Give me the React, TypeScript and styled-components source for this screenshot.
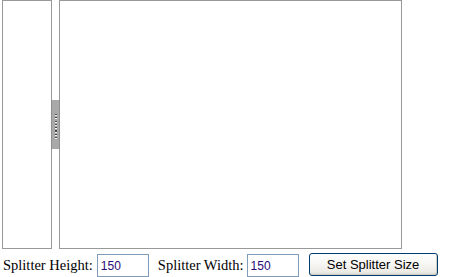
import React from "react";
import styled, { createGlobalStyle } from "styled-components";

const Global = createGlobalStyle`
  html, body { margin: 0; padding: 0; background: #fff; }
  body { font-family: "Liberation Serif", "Times New Roman", serif; }
`;

const Page = styled.div`
  padding-left: 2px;
  width: 451px;
`;

const Splitter = styled.div`
  display: flex;
  width: 400px;
  height: 249px;
`;

const Pane = styled.div<{ $w?: number }>`
  box-sizing: border-box;
  border: 1px solid #999;
  background: #fff;
  ${(p) => (p.$w ? `width: ${p.$w}px; flex: none;` : `flex: 1;`)}
`;

const SplitBar = styled.div`
  position: relative;
  width: 7px;
  flex: none;
`;

const Handle = styled.div`
  position: absolute;
  left: -1px;
  top: 100px;
  width: 9px;
  height: 49px;
  box-sizing: border-box;
  background: #a9a9a9;
  border-left: 1px solid #8e8e8e;
  border-right: 1px solid #8e8e8e;
  display: flex;
  justify-content: center;
  padding-top: 14px;
`;

const Dots = styled.div`
  width: 2px;
  height: 26px;
  margin-left: 1px;
  background: repeating-linear-gradient(
    to bottom,
    #4a4a4a 0 1px,
    #f4f4f4 1px 2px,
    transparent 2px 3.3px
  );
`;

const Row = styled.div`
  display: flex;
  align-items: center;
  height: 24px;
  margin-top: 4px;
  padding-left: 1px;
`;

const Label = styled.span<{ $gap?: number }>`
  font-family: "Liberation Serif", "Times New Roman", serif;
  font-size: 14.5px;
  color: #000;
  margin-left: ${(p) => p.$gap ?? 0}px;
  white-space: nowrap;
`;

const Field = styled.input<{ $gap: number }>`
  box-sizing: border-box;
  width: 52px;
  height: 23px;
  margin: 1px 0 0 ${(p) => p.$gap}px;
  padding: 1px 3px 0;
  border: 1px solid #7f9db9;
  font-family: "Liberation Sans", Arial, sans-serif;
  font-size: 12px;
  color: #2a0a78;
  background: #fff;
  outline: none;
`;

const Button = styled.button`
  box-sizing: border-box;
  width: 129px;
  height: 23px;
  margin: 0 0 2px 10px;
  padding: 0;
  border: 1px solid #003c74;
  border-radius: 3px;
  background: linear-gradient(to bottom, #ffffff 0%, #f7f7f4 45%, #ecebe6 85%, #d8d6cc 100%);
  box-shadow: inset -1px -1px 0 #d0cdc2;
  font-family: "Liberation Sans", Arial, sans-serif;
  font-size: 13px;
  color: #000;
  cursor: default;
`;

export default function App() {
  return (
    <Page>
      <Global />
      <Splitter>
        <Pane $w={50} />
        <SplitBar>
          <Handle>
            <Dots />
          </Handle>
        </SplitBar>
        <Pane />
      </Splitter>
      <Row>
        <Label>Splitter Height:</Label>
        <Field $gap={4} defaultValue="150" />
        <Label $gap={9}>Splitter Width:</Label>
        <Field $gap={3} defaultValue="150" />
        <Button>Set Splitter Size</Button>
      </Row>
    </Page>
  );
}
